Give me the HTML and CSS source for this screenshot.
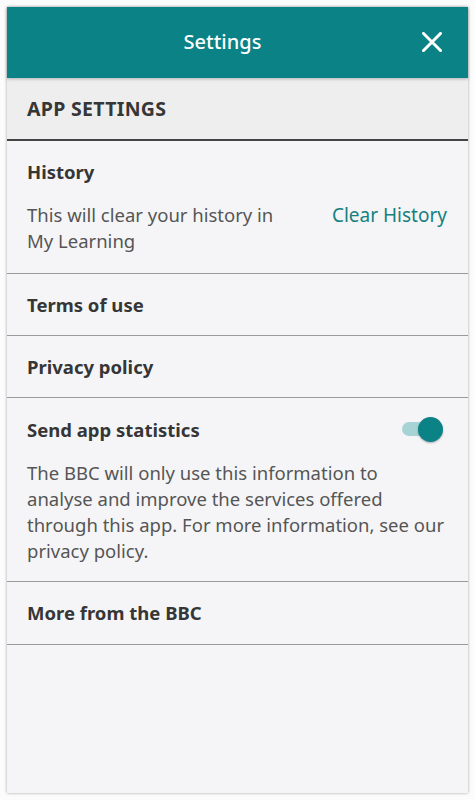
FILE: index.html
```html
<!DOCTYPE html>
<html lang="en">
<head>
<meta charset="utf-8">
<title>Settings</title>
<link rel="stylesheet" href="styles.css">
</head>
<body>
<div class="panel">
  <header class="topbar">
    <h1 class="topbar-title">Settings</h1>
    <button class="close" aria-label="Close">
      <svg width="20" height="20" viewBox="0 0 20 20"><path d="M1.5 1.5 L18.5 18.5 M18.5 1.5 L1.5 18.5" stroke="#fff" stroke-width="3" stroke-linecap="square"/></svg>
    </button>
  </header>
  <div class="section-head">APP SETTINGS</div>
  <div class="row row-history">
    <div class="row-title">History</div>
    <div class="row-body">
      <p class="desc desc-narrow">This will clear your history in My Learning</p>
      <span class="link">Clear History</span>
    </div>
  </div>
  <div class="row"><div class="row-title">Terms of use</div></div>
  <div class="row"><div class="row-title">Privacy policy</div></div>
  <div class="row row-stats">
    <div class="row-head">
      <div class="row-title">Send app statistics</div>
      <span class="toggle"><span class="track"></span><span class="knob"></span></span>
    </div>
    <p class="desc desc-wide">The BBC will only use this information to analyse and improve the services offered through this app. For more information, see our privacy policy.</p>
  </div>
  <div class="row row-more"><div class="row-title">More from the BBC</div></div>
</div>
</body>
</html>
```
FILE: styles.css
```css
html, body {
  margin: 0;
  padding: 0;
  background: #fcfcfd;
}
body {
  padding: 7px;
  font-family: "Noto Sans", sans-serif;
  color: #363636;
}
.panel {
  width: 461px;
  height: 786px;
  background: #f5f5f8;
  box-shadow: 0 0 3px rgba(0,0,0,0.35);
  display: flex;
  flex-direction: column;
}
.topbar {
  height: 71px;
  background: #0b8286;
  display: flex;
  align-items: center;
  justify-content: center;
  padding-right: 30px;
  position: relative;
  box-shadow: 0 1px 3px rgba(0,0,0,0.25);
}
.topbar-title {
  margin: -2px 0 0;
  color: #fff;
  font-size: 20px;
  font-weight: 500;
  line-height: 26px;
}
.close {
  position: absolute;
  right: 26px;
  top: 25px;
  width: 20px;
  height: 20px;
  padding: 0;
  border: 0;
  background: none;
  display: flex;
}
.section-head {
  height: 61px;
  background: #eeeeef;
  border-bottom: 2px solid #444;
  box-sizing: content-box;
  display: flex;
  align-items: center;
  padding-left: 20px;
  font-size: 19.5px;
  font-weight: 700;
  letter-spacing: 0.3px;
  color: #363636;
}
.row {
  padding: 19px 21px 18px 20px;
  border-bottom: 1px solid #9a9a9a;
}
.row-history { padding-bottom: 19px; }
.row-stats { padding-bottom: 17px; }
.row-more { padding-bottom: 19px; }
.row-title {
  font-size: 18.5px;
  line-height: 24px;
  font-weight: 700;
  color: #363636;
}
.row-body {
  display: flex;
  justify-content: space-between;
  align-items: flex-start;
  margin-top: 18px;
}
.desc {
  margin: 18px 0 0;
  font-size: 18.5px;
  line-height: 26px;
  color: #555;
}
.row-body .desc { margin: 0; }
.desc-narrow { width: 270px; }
.desc-wide { max-width: 420px; }
.link {
  font-size: 19px;
  line-height: 26px;
  color: #16807f;
}
.row-head {
  display: flex;
  justify-content: space-between;
  align-items: center;
}
.toggle {
  position: relative;
  width: 41px;
  height: 25px;
  margin-right: 4px;
}
.track {
  position: absolute;
  left: 0;
  top: 5px;
  width: 34px;
  height: 14px;
  border-radius: 7px;
  background: #a8d3d5;
}
.knob {
  position: absolute;
  right: 0;
  top: 0;
  width: 25px;
  height: 25px;
  border-radius: 50%;
  background: #0b8286;
  box-shadow: 0 1px 2px rgba(0,0,0,0.3);
}
```
